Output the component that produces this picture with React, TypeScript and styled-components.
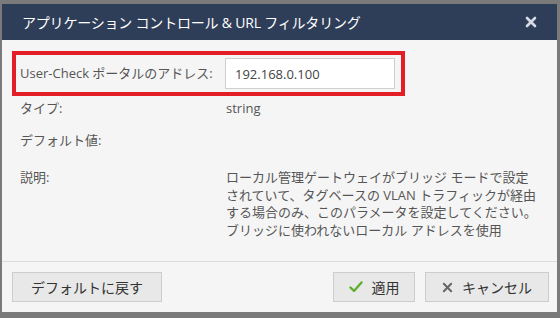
import React, { FC } from 'react';
import styled, { createGlobalStyle } from 'styled-components';

const GlobalStyle = createGlobalStyle`
  html, body {
    margin: 0;
    padding: 0;
    background: #7a7a7a;
  }
  body {
    font-family: "Open Sans", "Noto Sans CJK JP", sans-serif;
    font-size: 13px;
    color: #555;
  }
`;

const Page = styled.div`
  width: 560px;
  height: 318px;
  padding: 4px 3px 6px 2px;
  box-sizing: border-box;
`;

const Dialog = styled.div`
  width: 555px;
  height: 308px;
  background: #f5f5f5;
  display: flex;
  flex-direction: column;
`;

const Header = styled.div`
  height: 36px;
  flex: none;
  background: #2f3e58;
  display: flex;
  align-items: center;
  justify-content: space-between;
  padding: 0 20px 0 20px;
  color: #fff;
  font-size: 14px;
`;

const Title = styled.div`
  letter-spacing: -0.2px;
`;

const Close = styled.button`
  border: none;
  background: none;
  padding: 0;
  display: flex;
  cursor: pointer;
`;

const Body = styled.div`
  flex: 1;
  padding: 11px 10px 0 10px;
  display: flex;
  flex-direction: column;
  line-height: 17.5px;
`;

const Highlight = styled.div`
  border: 4px solid #e41e26;
  width: 393px;
  height: 45px;
  box-sizing: border-box;
  display: flex;
  align-items: center;
  padding-left: 4px;
`;

const Row = styled.div<{ $h: number; $top?: number }>`
  display: grid;
  grid-template-columns: 206px 1fr;
  min-height: ${(p) => p.$h}px;
  padding-left: 8px;
  padding-top: ${(p) => p.$top ?? 0}px;
  box-sizing: border-box;
  align-items: start;
`;

const Label = styled.div`
  color: #555;
`;

const Value = styled.div`
  color: #555;
`;

const Field = styled.div`
  display: grid;
  grid-template-columns: 205px 1fr;
  align-items: center;
  width: 100%;
`;

const Input = styled.input`
  width: 170px;
  height: 31px;
  box-sizing: border-box;
  border: 1px solid #cfcfcf;
  background: #fff;
  font-family: inherit;
  font-size: 13px;
  color: #444;
  padding: 0 9px;
  outline: none;
`;

const Footer = styled.div`
  height: 50px;
  flex: none;
  border-top: 1px solid #dcdcdc;
  display: flex;
  align-items: center;
  padding: 0 8px 0 10px;
  gap: 10px;
`;

const Spacer = styled.div`
  flex: 1;
`;

const Button = styled.button<{ $w: number }>`
  width: ${(p) => p.$w}px;
  height: 30px;
  border: 1px solid #cdcdcd;
  background: #e8e8e8;
  font-family: inherit;
  font-size: 14px;
  color: #333;
  display: flex;
  align-items: center;
  justify-content: center;
  gap: 9px;
  padding: 0;
  cursor: pointer;
`;

const Check = () => (
  <svg width="14" height="12" viewBox="0 0 14 12">
    <path d="M1.5 6.5 L5 10 L12.5 1.5" fill="none" stroke="#5fae2e" strokeWidth="2.4" strokeLinecap="round" strokeLinejoin="round" />
  </svg>
);

const Cross: FC<{ color: string; size: number; w: number }> = ({ color, size, w }) => (
  <svg width={size} height={size} viewBox="0 0 12 12">
    <path d="M2 2 L10 10 M10 2 L2 10" stroke={color} strokeWidth={w} strokeLinecap="round" />
  </svg>
);

export default function App() {
  return (
    <>
      <GlobalStyle />
      <Page>
        <Dialog>
          <Header>
            <Title>アプリケーション コントロール &amp; URL フィルタリング</Title>
            <Close>
              <Cross color="#d5dbe6" size={12} w={2.6} />
            </Close>
          </Header>
          <Body>
            <Highlight>
              <Field>
                <Label>User-Check ポータルのアドレス:</Label>
                <Input defaultValue="192.168.0.100" />
              </Field>
            </Highlight>
            <Row $h={36} $top={4}>
              <Label>タイプ:</Label>
              <Value>string</Value>
            </Row>
            <Row $h={37}>
              <Label>デフォルト値:</Label>
              <Value />
            </Row>
            <Row $h={80}>
              <Label>説明:</Label>
              <Value>
                ローカル管理ゲートウェイがブリッジ モードで設定
                <br />
                されていて、タグベースの VLAN トラフィックが経由
                <br />
                する場合のみ、このパラメータを設定してください。
                <br />
                ブリッジに使われないローカル アドレスを使用
              </Value>
            </Row>
          </Body>
          <Footer>
            <Button $w={150}>デフォルトに戻す</Button>
            <Spacer />
            <Button $w={82}>
              <Check />
              適用
            </Button>
            <Button $w={124}>
              <Cross color="#666" size={11} w={2.2} />
              キャンセル
            </Button>
          </Footer>
        </Dialog>
      </Page>
    </>
  );
}
